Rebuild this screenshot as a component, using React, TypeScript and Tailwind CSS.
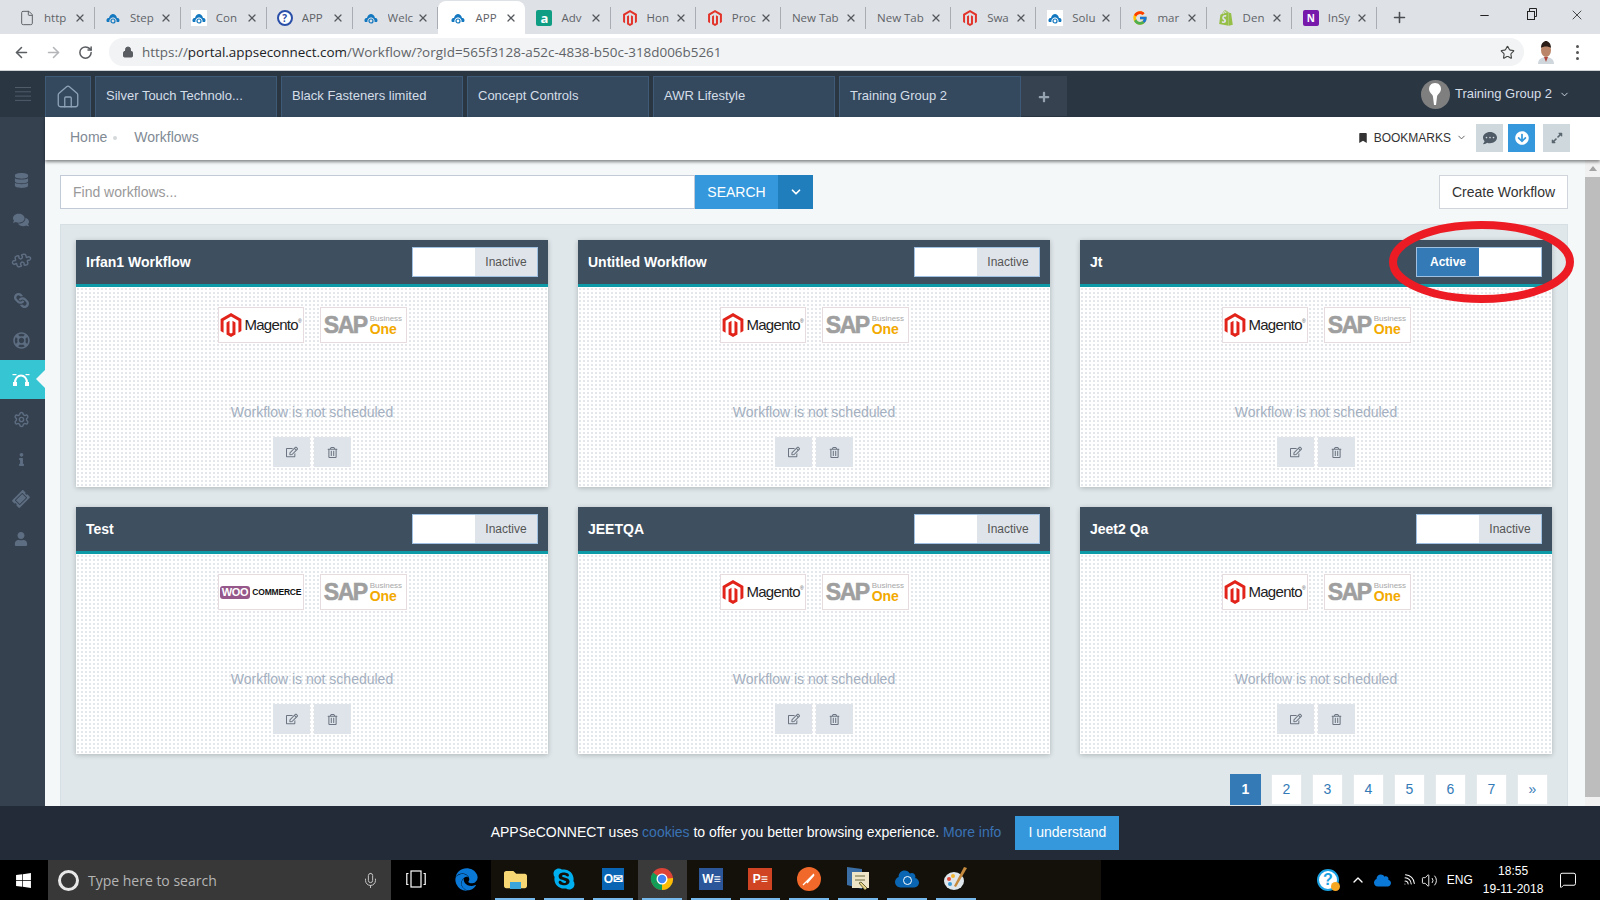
import React from 'react';
import { ArrowLeft, ArrowRight, RotateCw, Lock, Star, X, Plus, Minus, Mic, ChevronDown, Home, Puzzle, Settings, Wifi, Volume2, ChevronUp, MessageSquare, File } from 'lucide-react';
import { FaDatabase, FaComments, FaLink, FaRegLifeRing, FaInfo, FaTicketAlt, FaUser, FaRegEdit, FaRegTrashAlt, FaMagento, FaBookmark, FaCommentDots, FaArrowCircleDown, FaExpandAlt, FaWindows, FaEdge, FaSkype, FaShopify, FaPlus, FaCloud, FaFolder } from 'react-icons/fa';
import { FcGoogle } from 'react-icons/fc';

const CloudIcon = () => (
  <svg width="16" height="16" viewBox="0 0 16 16">
    <path d="M2 12c-1.500-2.500.5-4.500 2-4 .5-2.500 2.500-4 4-4s3.500 1.500 4 4c1.500-.5 3.500 1.500 2 4h-2.500c.5-2-1-4.500-3.500-4.500S4 10 4.500 12z" fill="#1378bf" />
    <circle cx="8" cy="11" r="2" fill="none" stroke="#1378bf" strokeWidth="1.200" />
  </svg>
);

const WhiteCloud = () => (
  <span className="flex h-4 w-4 items-center justify-center bg-white"><CloudIcon /></span>
);

const HelpIcon = () => (
  <span className="flex h-4 w-4 items-center justify-center rounded-full border-2 border-[#2a4fa8] bg-white text-[10px] font-bold text-[#2a4fa8]">?</span>
);

const AdvIcon = () => (
  <span className="flex h-4 w-4 items-center justify-center rounded-[2px] bg-[#0f9d84] text-[13px] font-bold leading-none text-white">a</span>
);

const NoteIcon = () => (
  <span className="flex h-4 w-4 items-center justify-center rounded-[2px] bg-[#7719aa] text-[10px] font-bold text-white">N</span>
);

const tabs = [
  { icon: <File size={16} strokeWidth={1.500} color="#5f6368" />, label: 'http' },
  { icon: <CloudIcon />, label: 'Step' },
  { icon: <WhiteCloud />, label: 'Con' },
  { icon: <HelpIcon />, label: 'APP' },
  { icon: <CloudIcon />, label: 'Welc' },
  { icon: <CloudIcon />, label: 'APP', active: true },
  { icon: <AdvIcon />, label: 'Adv' },
  { icon: <FaMagento size={16} color="#e2342a" />, label: 'Hon' },
  { icon: <FaMagento size={16} color="#e2342a" />, label: 'Proc' },
  { label: 'New Tab' },
  { label: 'New Tab' },
  { icon: <FaMagento size={16} color="#e2342a" />, label: 'Swa' },
  { icon: <WhiteCloud />, label: 'Solu' },
  { icon: <FcGoogle size={16} />, label: 'mar' },
  { icon: <FaShopify size={16} color="#95bf47" />, label: 'Den' },
  { icon: <NoteIcon />, label: 'InSy' },
];

const ChromeTabs = () => (
  <div className="flex h-[34px] bg-[#dee1e6] pl-[9px] pt-[1px]">
    {tabs.map((t, i) => (
      <div
        key={i}
        className={
          t.active
            ? 'flex h-[33px] w-[87px] items-center rounded-t-lg bg-white pl-[12px] pr-[8px]'
            : i < 5
              ? 'my-[6px] flex h-[22px] w-[85.900px] items-center border-r border-[#a9adb3] pl-[10px] pr-[8px]'
              : 'my-[6px] flex h-[22px] w-[85.150px] items-center border-r border-[#a9adb3] pl-[11px] pr-[8px]'
        }
      >
        {t.icon && <span className="mr-[9px] flex w-4 shrink-0 justify-center">{t.icon}</span>}
        <span className="flex-1 overflow-hidden whitespace-nowrap text-[11.500px] text-[#5f6368]">{t.label}</span>
        <X size={12} strokeWidth={2.500} color="#55595e" className="shrink-0" />
      </div>
    ))}
    <Plus size={17} strokeWidth={2.200} color="#4a4d52" className="ml-[14px] mt-[8px]" />
    <div className="ml-auto flex pr-[15px] pt-[2px]">
      <Minus size={13} color="#222" className="mt-[6px]" />
      <svg width="12" height="12" viewBox="0 0 12 12" fill="none" stroke="#222" className="ml-[35px] mt-[5px]">
        <rect x="1.500" y="3.500" width="7" height="8" fill="#dee1e6" />
        <path d="M3.500 3.500v-3h7v8h-2" />
      </svg>
      <X size={16} strokeWidth={1.200} color="#222" className="ml-[31px] mt-[4px]" />
    </div>
  </div>
);

const AddressBar = () => (
  <div className="flex h-[37px] items-center border-b border-[#d0d3d6] bg-white">
    <ArrowLeft size={17} strokeWidth={2.200} color="#5a5d61" className="ml-[13px]" />
    <ArrowRight size={17} strokeWidth={2.200} color="#b3b5b8" className="ml-[15px]" />
    <RotateCw size={15} strokeWidth={2.400} color="#5a5d61" className="ml-[16px]" />
    <div className="ml-[16px] flex h-[28px] w-[1415px] items-center rounded-full bg-[#f1f3f4] pl-[13px]">
      <Lock size={12} fill="#5a5d61" color="#5a5d61" />
      <span className="ml-[8px] whitespace-nowrap text-[13.450px] text-[#5f6368]">
        https://<span className="text-[#202124]">portal.appseconnect.com</span>/Workflow/?orgId=565f3128-a52c-4838-b50c-318d006b5261
      </span>
      <Star size={15} strokeWidth={1.800} color="#444" className="ml-auto mr-[9px]" />
    </div>
    <svg width="18" height="24" viewBox="0 0 18 24" className="ml-[13px]">
      <path d="M1 24c0-5 4-7 8-7s8 2 8 7z" fill="#cfd6dc" />
      <path d="M7 17l2 5 2-5z" fill="#b0463c" />
      <ellipse cx="9" cy="10" rx="5" ry="7" fill="#b98468" />
      <path d="M4 8c0-5 3-7 5-7s5 2 5 7c-2-2-8-2-10 0z" fill="#2a1d17" />
    </svg>
    <div className="ml-[21px] flex flex-col gap-[3px]">
      <span className="h-[3px] w-[3px] rounded-full bg-[#555]" />
      <span className="h-[3px] w-[3px] rounded-full bg-[#555]" />
      <span className="h-[3px] w-[3px] rounded-full bg-[#555]" />
    </div>
  </div>
);

const orgs = ['Silver Touch Technolo...', 'Black Fasteners limited', 'Concept Controls', 'AWR Lifestyle', 'Training Group 2'];

const AppHeader = () => (
  <div className="flex h-[46px] bg-[#2b3643]">
    <div className="flex w-[45px] items-center justify-center">
      <svg width="16" height="14" viewBox="0 0 16 14" stroke="#4f5d6b" strokeWidth="1">
        <path d="M0 .500h16M0 4.800h16M0 9.100h16M0 13.400h16" />
      </svg>
    </div>
    <div className="mt-[5px] flex h-[41px] w-[46px] items-center justify-center border border-b-0 border-[#3e5a76] bg-[#34495e]">
      <Home size={26} strokeWidth={1.200} color="#8fa3b8" />
    </div>
    {orgs.map((o) => (
      <div key={o} className="ml-[4px] mt-[5px] flex h-[41px] w-[182px] items-center border border-b-0 border-[#3e5a76] bg-[#34495e] pb-[3px] pl-[10px] text-[13px] text-[#d5dee8]">
        {o}
      </div>
    ))}
    <div className="mt-[5px] flex h-[40px] w-[46px] items-center justify-center bg-[#36424f] pt-[1px]">
      <FaPlus size={12} color="#95a3b1" />
    </div>
    <div className="ml-auto flex items-center pr-[30px] text-[13px] text-[#d5dee8]">
      <span className="flex h-[29px] w-[29px] items-center justify-center rounded-full bg-[#7f7f7f]">
        <svg width="14" height="22" viewBox="0 0 14 22"><path d="M7 0c4 0 6 3 6 6 0 4-4 5-4 8l-1 8H6l-1-8c0-3-4-4-4-8 0-3 2-6 6-6z" fill="#fff" /></svg>
      </span>
      <span className="ml-[5px]">Training Group 2</span>
      <ChevronDown size={11} className="ml-[7px]" />
    </div>
  </div>
);

const sideIcons = [
  <FaDatabase size={15} />,
  <FaComments size={16} />,
  <Puzzle size={17} className="rotate-[30deg]" />,
  <FaLink size={15} className="rotate-90" />,
  <FaRegLifeRing size={17} />,
  null,
  <Settings size={17} />,
  <FaInfo size={13} />,
  <FaTicketAlt size={16} className="-rotate-45" />,
  <FaUser size={14} />,
];

const Sidebar = () => (
  <div className="w-[45px] shrink-0 bg-[#364150] pt-[43px]">
    {sideIcons.map((ic, i) =>
      ic ? (
        <div key={i} className="flex h-[40px] items-center justify-center pr-[3px] text-[#5e6e82]">{ic}</div>
      ) : (
        <div key={i} className="relative flex h-[39px] items-center justify-center bg-[#36c6d3]">
          <svg width="18" height="14" viewBox="0 0 18 14" className="-ml-[4px]" fill="#fff">
            <path d="M3 10C3 5 6 2.500 9 2.500S15 5 15 10" fill="none" stroke="#fff" strokeWidth="2" />
            <rect x="0.500" y="1" width="4" height="1.200" />
            <rect x="13.500" y="1" width="4" height="1.200" />
            <rect x="1" y="9" width="4" height="4" />
            <rect x="13" y="9" width="4" height="4" />
          </svg>
          <span className="absolute right-0 top-[10px] h-0 w-0 border-y-[9px] border-r-[9px] border-y-transparent border-r-[#f4f8f9]" />
        </div>
      ),
    )}
  </div>
);

const Breadcrumb = () => (
  <div className="relative z-10 flex h-[43px] shrink-0 items-center bg-white pb-[2px] pl-[25px] text-[14px] text-[#7f8a94] shadow-[0_2px_3px_rgba(0,0,0,0.45)]">
    <span>Home</span>
    <span className="ml-[6px] h-[4px] w-[4px] rounded-full bg-[#d5d8da]" />
    <span className="ml-[17px]">Workflows</span>
    <div className="ml-auto flex items-center pr-[30px]">
      <FaBookmark size={10} color="#333" />
      <span className="ml-[6px] text-[12px] text-[#333]">BOOKMARKS</span>
      <ChevronDown size={11} color="#555" className="ml-[5px]" />
      <span className="ml-[9px] flex h-[28px] w-[27px] items-center justify-center bg-[#cfd8dc]"><FaCommentDots size={14} color="#4f5b67" /></span>
      <span className="ml-[5px] flex h-[28px] w-[27px] items-center justify-center bg-[#3598dc]"><FaArrowCircleDown size={14} color="#fff" /></span>
      <span className="ml-[8px] mt-[1px] flex h-[28px] w-[27px] items-center justify-center bg-[#cfd8dc]"><FaExpandAlt size={12} color="#5a6770" /></span>
    </div>
  </div>
);

const MagentoLogo = () => (
  <div className="flex items-center">
    <FaMagento size={24} color="#e2231a" />
    <span className="ml-[1px] text-[15px] tracking-[-0.7px] text-[#222]">Magento</span>
    <span className="mb-[6px] text-[5px] text-[#555]">®</span>
  </div>
);

const SapLogo = () => (
  <div className="flex items-center">
    <span className="text-[23px] font-bold tracking-[-1.500px] text-[#9f9f9f] [-webkit-text-stroke:0.6px_#9f9f9f]">SAP</span>
    <div className="ml-[3px] flex flex-col leading-none">
      <span className="text-[8px] text-[#a8a8a8]">Business</span>
      <span className="-mt-[1px] text-[14px] font-bold text-[#f2a900]">One</span>
    </div>
  </div>
);

const WooLogo = () => (
  <div className="flex items-center">
    <span className="rounded-[3px] bg-[#96588a] px-[2px] text-[11px] font-bold leading-[13px] tracking-[-0.3px] text-white">WOO</span>
    <span className="ml-[2px] text-[8.500px] font-bold tracking-[-0.2px] text-[#111]">COMMERCE</span>
  </div>
);

const Toggle = ({ active }: { active?: boolean }) => (
  <div className="flex h-[30px] w-[126px] border border-[#9fc0e0] bg-white text-[12px]">
    {active ? (
      <>
        <span className="flex w-[62px] items-center justify-center bg-[#337ab7] font-bold text-white">Active</span>
        <span className="flex-1 bg-white" />
      </>
    ) : (
      <>
        <span className="w-[62px] bg-white" />
        <span className="flex flex-1 items-center justify-center bg-[#dfe4ea] text-[#555]">Inactive</span>
      </>
    )}
  </div>
);

const WorkflowCard = ({ title, active, woo }: { title: string; active?: boolean; woo?: boolean }) => (
  <div className="h-[247px] bg-white shadow-[0_1px_5px_rgba(0,0,0,0.22)]">
    <div className="flex h-[47px] items-center justify-between border-b-[3px] border-[#0e9aa7] bg-[#3e4f5f] pl-[10px] pr-[10px]">
      <span className="text-[14px] font-bold text-white">{title}</span>
      <Toggle active={active} />
    </div>
    <div className="flex h-[200px] flex-col items-center bg-[radial-gradient(circle,#e2e5e9_0.7px,transparent_0.8px)] bg-[length:4px_4px] pt-[20px]">
      <div className="flex gap-[16px]">
        <div className="flex h-[36px] w-[86px] items-center justify-center border border-[#e6dcdf] bg-white">
          {woo ? <WooLogo /> : <MagentoLogo />}
        </div>
        <div className="flex h-[36px] w-[87px] items-center justify-center border border-[#e6dcdf] bg-white">
          <SapLogo />
        </div>
      </div>
      <div className="mt-[59px] text-[14px] leading-[20px] text-[#a3afc0]">Workflow is not scheduled</div>
      <div className="mt-[15px] flex gap-[4px]">
        <span className="flex h-[30px] w-[37px] items-center justify-center bg-[#dfe4ea]"><FaRegEdit size={12} color="#6b7480" /></span>
        <span className="flex h-[30px] w-[37px] items-center justify-center bg-[#dfe4ea]"><FaRegTrashAlt size={11} color="#6b7480" /></span>
      </div>
    </div>
  </div>
);

const cards = [
  { title: 'Irfan1 Workflow' },
  { title: 'Untitled Workflow' },
  { title: 'Jt', active: true },
  { title: 'Test', woo: true },
  { title: 'JEETQA' },
  { title: 'Jeet2 Qa' },
];

const pages = ['1', '2', '3', '4', '5', '6', '7', '»'];

const Main = () => (
  <div className="flex min-h-0 flex-1">
    <div className="min-w-0 flex-1 bg-[#f4f8f9] pl-[15px] pr-[17px] pt-[15px]">
      <div className="flex h-[34px]">
        <div className="flex w-[635px] items-center border border-[#c2cad8] bg-white pl-[12px] text-[14px] text-[#999]">Find workflows...</div>
        <div className="flex w-[83px] items-center justify-center bg-[#3598dc] text-[14px] text-white">SEARCH</div>
        <div className="flex w-[35px] items-center justify-center bg-[#217ebd]"><ChevronDown size={14} strokeWidth={3} color="#fff" /></div>
        <div className="ml-auto flex w-[129px] items-center justify-center border border-[#d0d5db] bg-white text-[14px] text-[#333]">Create Workflow</div>
      </div>
      <div className="mt-[15px] h-[600px] border border-[#d6dfe3] bg-[#dfe7ea] pl-[15px] pr-[15px] pt-[15px]">
        <div className="grid grid-cols-[472px_472px_472px] gap-x-[30px] gap-y-[20px]">
          {cards.map((c) => (
            <WorkflowCard key={c.title} title={c.title} active={c.active} woo={c.woo} />
          ))}
        </div>
        <div className="mt-[20px] flex justify-end gap-[10px] pr-[4px]">
          {pages.map((p, i) => (
            <span
              key={p}
              className={
                i === 0
                  ? 'flex h-[31px] w-[31px] items-center justify-center bg-[#337ab7] text-[14px] font-bold text-white'
                  : 'flex h-[31px] w-[31px] items-center justify-center border border-[#e4e9ec] bg-white text-[14px] text-[#337ab7]'
              }
            >
              {p}
            </span>
          ))}
        </div>
      </div>
    </div>
    <div className="flex w-[15px] shrink-0 flex-col bg-[#f1f1f1]">
      <div className="flex h-[17px] items-center justify-center">
        <span className="h-0 w-0 border-x-[4px] border-b-[5px] border-x-transparent border-b-[#a3a3a3]" />
      </div>
      <div className="h-[620px] bg-[#bdbdbd]" />
    </div>
  </div>
);

const CookieBar = () => (
  <div className="flex h-[54px] shrink-0 items-center justify-center bg-[#232b38] pb-[1px] pl-[10px] text-[14px] text-white">
    <span>APPSeCONNECT uses <span className="text-[#3a73b5]">cookies</span> to offer you better browsing experience. <span className="text-[#3a73b5]">More info</span></span>
    <span className="ml-[14px] flex h-[34px] w-[104px] items-center justify-center bg-[#3598dc]">I understand</span>
  </div>
);

const TaskSlot = ({ children, on, hi }: { children: React.ReactNode; on?: boolean; hi?: boolean }) => (
  <div className={hi ? 'flex h-[40px] w-[49px] flex-col items-center bg-[#3a3a3a]' : 'flex h-[40px] w-[49px] flex-col items-center'}>
    <div className="flex h-[38px] items-center justify-center">{children}</div>
    {on && <span className="h-[2px] w-[40px] bg-[#76b9ed]" />}
  </div>
);

const Taskbar = () => (
  <div className="flex h-[40px] shrink-0 bg-black text-white">
    <div className="flex w-[48px] items-center justify-center"><FaWindows size={17} /></div>
    <div className="flex w-[344px] items-center bg-[#383838] pl-[10px] text-[14px] text-[#b5b5b5]">
      <span className="h-[21px] w-[21px] rounded-full border-[3px] border-[#e8e8e8]" />
      <span className="ml-[9px] font-['Open_Sans',sans-serif]">Type here to search</span>
      <Mic size={17} strokeWidth={1.400} color="#c5c5c5" className="ml-auto mr-[12px]" />
    </div>
    <TaskSlot>
      <svg width="20" height="18" viewBox="0 0 20 18" fill="none" stroke="#fff" strokeWidth="1.200">
        <rect x="5" y="1" width="10" height="16" />
        <path d="M2.500 3.500H0.800v11h1.700M17.500 3.500h1.700v11h-1.700" />
      </svg>
    </TaskSlot>
    <div className="ml-[1.500px]">
      <TaskSlot><FaEdge size={23} color="#0a78d7" /></TaskSlot>
    </div>
    <div className="flex flex-1 bg-[#14110b]">
      <TaskSlot on>
        <span className="relative flex"><FaFolder size={23} color="#f6d774" /><span className="absolute bottom-[2px] left-[6px] h-[7px] w-[11px] bg-[#3aa6dc]" /></span>
      </TaskSlot>
      <TaskSlot on><FaSkype size={24} color="#00aff0" /></TaskSlot>
      <TaskSlot on>
        <span className="flex h-[22px] w-[22px] items-center justify-center bg-[#0a64b4] text-[12px] font-bold">O✉</span>
      </TaskSlot>
      <TaskSlot on hi>
        <svg width="24" height="24" viewBox="0 0 24 24">
          <circle cx="12" cy="12" r="11" fill="#db4437" />
          <path d="M12 12L2.500 17.500A11 11 0 0 1 3 5.500z" fill="#0f9d58" />
          <path d="M12 12L2.500 17.500A11 11 0 0 0 22.500 15z" fill="#0f9d58" />
          <path d="M12 12L23 11A11 11 0 0 1 12 23z" fill="#fbbc05" />
          <circle cx="12" cy="12" r="5.500" fill="#fff" />
          <circle cx="12" cy="12" r="4.200" fill="#4285f4" />
        </svg>
      </TaskSlot>
      <TaskSlot on>
        <span className="flex h-[22px] w-[24px] items-center justify-center bg-[#2b579a] text-[12px] font-bold">W≡</span>
      </TaskSlot>
      <TaskSlot on>
        <span className="flex h-[22px] w-[24px] items-center justify-center bg-[#d04423] text-[12px] font-bold">P≡</span>
      </TaskSlot>
      <TaskSlot on>
        <span className="flex h-[24px] w-[24px] items-center justify-center rounded-full bg-[#f0682a]">
          <svg width="14" height="14" viewBox="0 0 14 14"><path d="M1 13L12 2M5 11l7-8" stroke="#fff" strokeWidth="1.300" /></svg>
        </span>
      </TaskSlot>
      <TaskSlot on>
        <svg width="24" height="26" viewBox="0 0 24 26">
          <path d="M1 1l15 2v20L1 19z" fill="#3b6ea5" />
          <rect x="6" y="6" width="17" height="16" fill="#efe6c8" />
          <path d="M9 10h10M9 14h10M13 17l6 7 2-2-6-6z" stroke="#6b6b3a" strokeWidth="1" fill="#e8d58a" />
        </svg>
      </TaskSlot>
      <TaskSlot on>
        <span className="relative flex"><FaCloud size={24} color="#0a66b2" /><span className="absolute left-[8px] top-[9px] h-[9px] w-[9px] rounded-full border border-white" /></span>
      </TaskSlot>
      <TaskSlot on>
        <svg width="26" height="26" viewBox="0 0 26 26">
          <ellipse cx="11" cy="15" rx="10" ry="9" fill="#dfe7ec" />
          <circle cx="6" cy="13" r="2" fill="#e14b3b" />
          <circle cx="10" cy="10" r="2" fill="#f2b632" />
          <circle cx="7" cy="18" r="2" fill="#3a9bd9" />
          <path d="M24 2L13 21l-2-1L21 1z" fill="#c58a3d" />
        </svg>
      </TaskSlot>
      <div className="w-[120px]" />
    </div>
    <div className="flex w-[500px] items-center">
      <span className="relative ml-[216px] flex h-[22px] w-[22px] items-center justify-center rounded-full border-2 border-[#1ba1e2] bg-white text-[16px] font-bold leading-none text-[#1ba1e2]">
        ?
        <span className="absolute -bottom-[2px] -right-[3px] h-[9px] w-[9px] rounded-full bg-[#f5a623]" />
      </span>
      <ChevronUp size={16} className="ml-[11px]" />
      <FaCloud size={17} color="#0a78d7" className="ml-[8px]" />
      <Wifi size={15} strokeWidth={1.600} className="ml-[10px] rotate-45" />
      <Volume2 size={17} strokeWidth={1.300} className="ml-[5px]" />
      <span className="ml-[9px] text-[12px]">ENG</span>
      <div className="ml-[10px] flex flex-col items-center text-[12px] leading-[18px]">
        <span>18:55</span>
        <span>19-11-2018</span>
      </div>
      <MessageSquare size={18} strokeWidth={1.300} className="ml-[16px]" />
    </div>
  </div>
);

export default function App() {
  return (
    <div className="relative flex h-[900px] w-[1600px] flex-col overflow-hidden font-['Liberation_Sans',Arial,sans-serif]">
      <div className="font-['Open_Sans',sans-serif]">
        <ChromeTabs />
        <AddressBar />
      </div>
      <AppHeader />
      <div className="flex min-h-0 flex-1">
        <Sidebar />
        <div className="flex min-w-0 flex-1 flex-col">
          <Breadcrumb />
          <Main />
        </div>
      </div>
      <CookieBar />
      <Taskbar />
      {/* hand-drawn red circle on the Jt toggle */}
      <svg width="185" height="82" viewBox="0 0 185 82" className="absolute left-[1389px] top-[221px]" fill="none">
        <ellipse cx="92.500" cy="41" rx="88.500" ry="37" stroke="#ed1c24" strokeWidth="8" />
      </svg>
    </div>
  );
}
